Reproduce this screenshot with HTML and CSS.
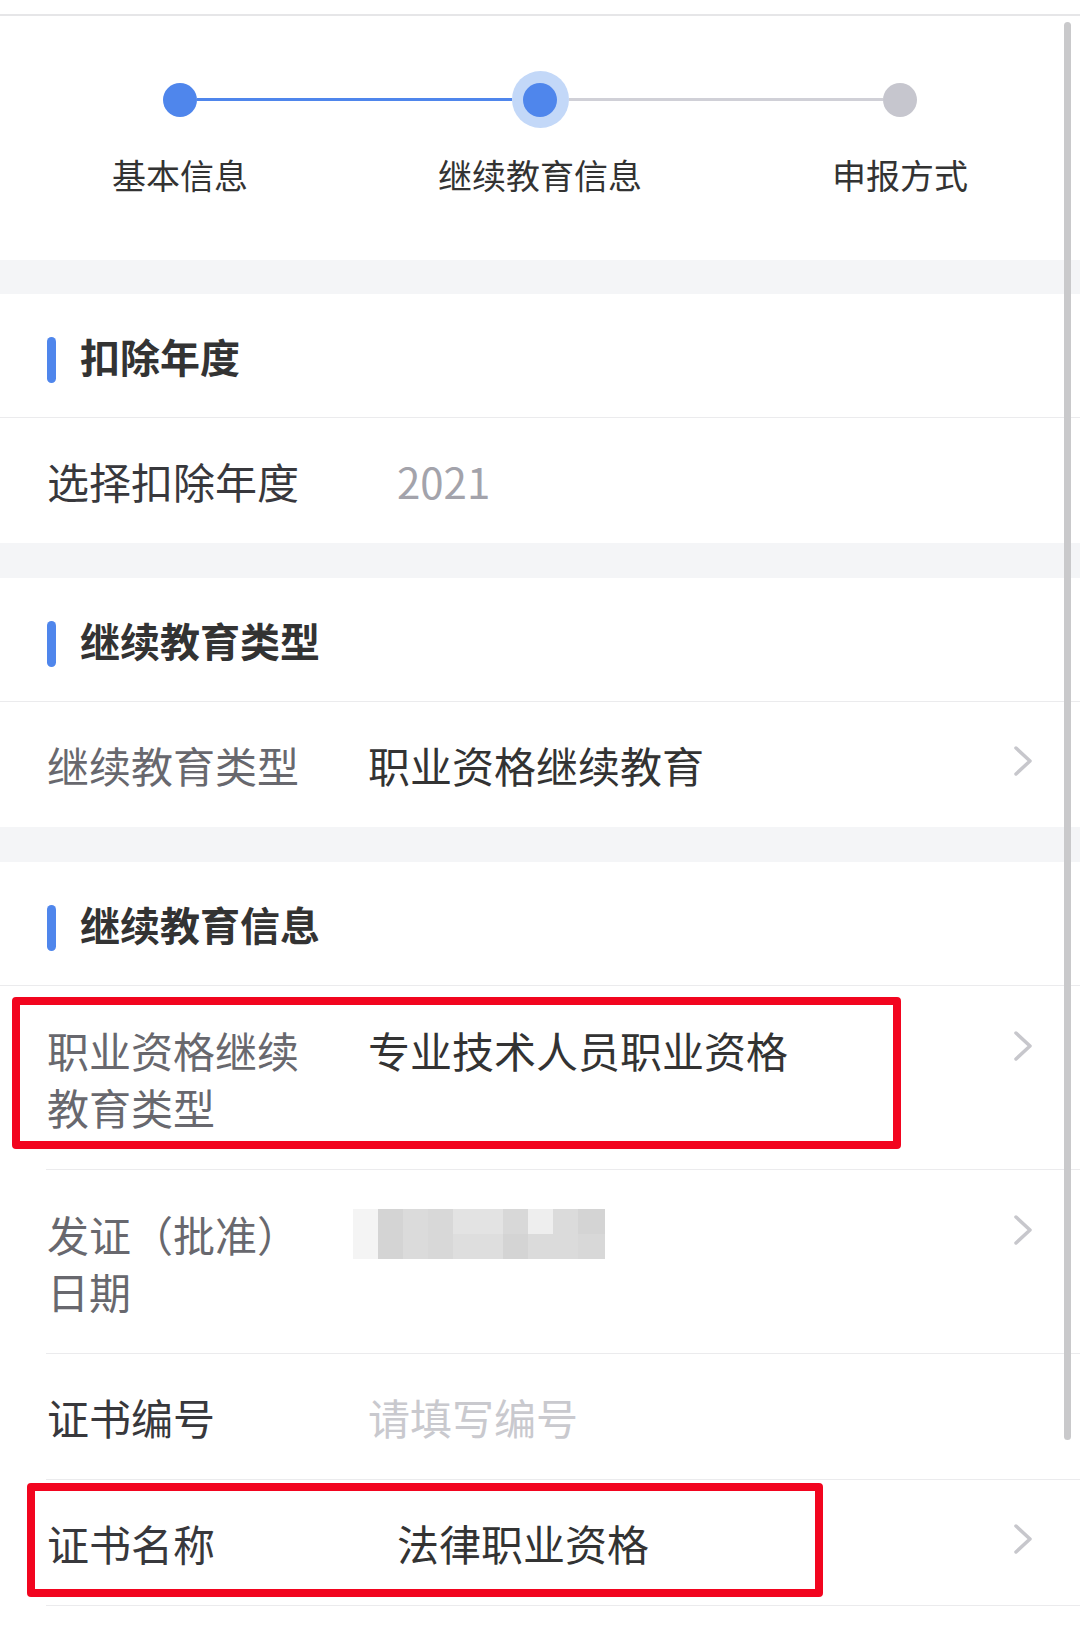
FILE: index.html
```html
<!DOCTYPE html>
<html lang="zh-CN">
<head>
<meta charset="utf-8">
<title>继续教育信息</title>
<link rel="stylesheet" href="styles.css">
</head>
<body>
<div class="page">
  <div class="topbar"></div>

  <div class="steps">
    <div class="track">
      <span class="dot active"></span>
      <span class="line active"></span>
      <span class="halo"><span class="dot active"></span></span>
      <span class="line"></span>
      <span class="dot"></span>
    </div>
    <div class="step-labels">
      <span>基本信息</span>
      <span>继续教育信息</span>
      <span>申报方式</span>
    </div>
  </div>

  <div class="band band-first"></div>

  <div class="head"><i class="bar"></i><h2>扣除年度</h2></div>
  <div class="row">
    <div class="label dark">选择扣除年度</div>
    <div class="value muted far">2021</div>
  </div>

  <div class="band"></div>

  <div class="head"><i class="bar"></i><h2>继续教育类型</h2></div>
  <div class="row">
    <div class="label">继续教育类型</div>
    <div class="value">职业资格继续教育</div>
    <svg class="chev" viewBox="0 0 20 30" width="20" height="30"><polyline points="3,2 17,15 3,28" /></svg>
  </div>

  <div class="band"></div>

  <div class="head"><i class="bar"></i><h2>继续教育信息</h2></div>

  <div class="row inset tall">
    <div class="label">职业资格继续教育类型</div>
    <div class="value">专业技术人员职业资格</div>
    <svg class="chev" viewBox="0 0 20 30" width="20" height="30"><polyline points="3,2 17,15 3,28" /></svg>
    <div class="mark mark-one"></div>
  </div>

  <div class="row inset tall">
    <div class="label">发证（批准）日期</div>
    <div class="value">
      <div class="blur">
        <span class="g0"></span><span class="g1"></span><span class="g3"></span><span class="g2"></span><span class="g5"></span><span class="g5"></span><span class="g2"></span><span class="g6"></span><span class="g3"></span><span class="g1"></span>
        <span class="g0"></span><span class="g1"></span><span class="g3"></span><span class="g2"></span><span class="g4"></span><span class="g4"></span><span class="g1"></span><span class="g3"></span><span class="g3"></span><span class="g2"></span>
      </div>
    </div>
    <svg class="chev" viewBox="0 0 20 30" width="20" height="30"><polyline points="3,2 17,15 3,28" /></svg>
  </div>

  <div class="row inset">
    <div class="label dark">证书编号</div>
    <div class="value placeholder">请填写编号</div>
  </div>

  <div class="row inset">
    <div class="label dark">证书名称</div>
    <div class="value far">法律职业资格</div>
    <svg class="chev" viewBox="0 0 20 30" width="20" height="30"><polyline points="3,2 17,15 3,28" /></svg>
    <div class="mark mark-two"></div>
  </div>

  <div class="scrollbar"></div>
</div>
</body>
</html>
```

FILE: styles.css
```css
* { box-sizing: border-box; }

html, body {
  margin: 0;
  padding: 0;
  background: #ffffff;
}

body {
  font-family: "Noto Sans CJK SC", "Noto Sans", sans-serif;
  color: #333333;
}

.page {
  position: relative;
  width: 1080px;
  min-height: 1643px;
  background: #ffffff;
}

.topbar {
  height: 16px;
  border-bottom: 2px solid #e6e6e8;
}

/* ---------- steps ---------- */
.steps {
  height: 244px;
  padding-top: 55px;
}

.track {
  display: flex;
  align-items: center;
  height: 57px;
  margin: 0 163px;
}

.dot {
  flex: none;
  width: 34px;
  height: 34px;
  border-radius: 50%;
  background: #c6c6ce;
}

.dot.active {
  background: #4f86ec;
}

.halo {
  flex: none;
  width: 57px;
  height: 57px;
  border-radius: 50%;
  background: #c3d8f8;
  display: flex;
  align-items: center;
  justify-content: center;
}

.line {
  flex: 1;
  height: 3px;
  background: #d0d0d7;
}

.line.active {
  background: #4f86ec;
}

.step-labels {
  display: grid;
  grid-template-columns: repeat(3, 1fr);
  margin-top: 23px;
  font-size: 34px;
  line-height: 48px;
  color: #333333;
  text-align: center;
}

/* ---------- bands ---------- */
.band {
  height: 35px;
  background: #f4f5f7;
}

.band-first {
  height: 34px;
}

/* ---------- section heads ---------- */
.head {
  display: flex;
  align-items: center;
  height: 124px;
  padding-left: 47px;
  border-bottom: 1px solid #ebebed;
}

.bar {
  flex: none;
  width: 9px;
  height: 46px;
  margin-top: 8px;
  border-radius: 5px;
  background: #4f86ec;
}

.head h2 {
  margin: 0 0 0 24px;
  font-size: 40px;
  line-height: 56px;
  font-weight: 700;
  color: #333333;
}

/* ---------- rows ---------- */
.row {
  position: relative;
  display: flex;
  align-items: flex-start;
  padding: 34px 47px 34px 47px;
  font-size: 42px;
  line-height: 57px;
}

.row.inset {
  margin-left: 46px;
  padding-left: 1px;
  border-bottom: 1px solid #ebebed;
}

.row.tall {
  padding-top: 35px;
  padding-bottom: 34px;
}

.label {
  flex: none;
  width: 260px;
  color: #68686e;
}

.label.dark {
  color: #38383c;
}

.value {
  flex: 1;
  margin-left: 61px;
  color: #333333;
}

.value.far {
  margin-left: 90px;
}

.value.muted {
  color: #a3a3ab;
}

.value.placeholder {
  color: #c9c9ce;
}

.chev {
  flex: none;
  margin-top: 10px;
  margin-left: 16px;
}

.chev polyline {
  fill: none;
  stroke: #c7c7cc;
  stroke-width: 3.5;
  stroke-linecap: round;
  stroke-linejoin: round;
}

/* pixelated (blurred) date */
.blur {
  display: grid;
  grid-template-columns: repeat(9, 25px) 27px;
  grid-auto-rows: 25px;
  width: 252px;
  margin-top: 4px;
  margin-left: -15px;
}

.g0 { background: #f4f4f4; }
.g1 { background: #d4d4d4; }
.g2 { background: #d8d8d8; }
.g3 { background: #dbdbdb; }
.g4 { background: #dedede; }
.g5 { background: #e3e3e3; }
.g6 { background: #eeeeee; }

/* red annotation boxes */
.mark {
  position: absolute;
  border: 8px solid #f2051f;
  border-radius: 4px;
  pointer-events: none;
}

.mark-one {
  left: -34px;
  top: 11px;
  width: 889px;
  height: 152px;
}

.mark-two {
  left: -19px;
  top: 3px;
  width: 796px;
  height: 114px;
}

/* overlay scrollbar */
.scrollbar {
  position: absolute;
  left: 1064px;
  top: 22px;
  width: 7px;
  height: 1418px;
  border-radius: 4px;
  background: #c9c9cb;
}
```
